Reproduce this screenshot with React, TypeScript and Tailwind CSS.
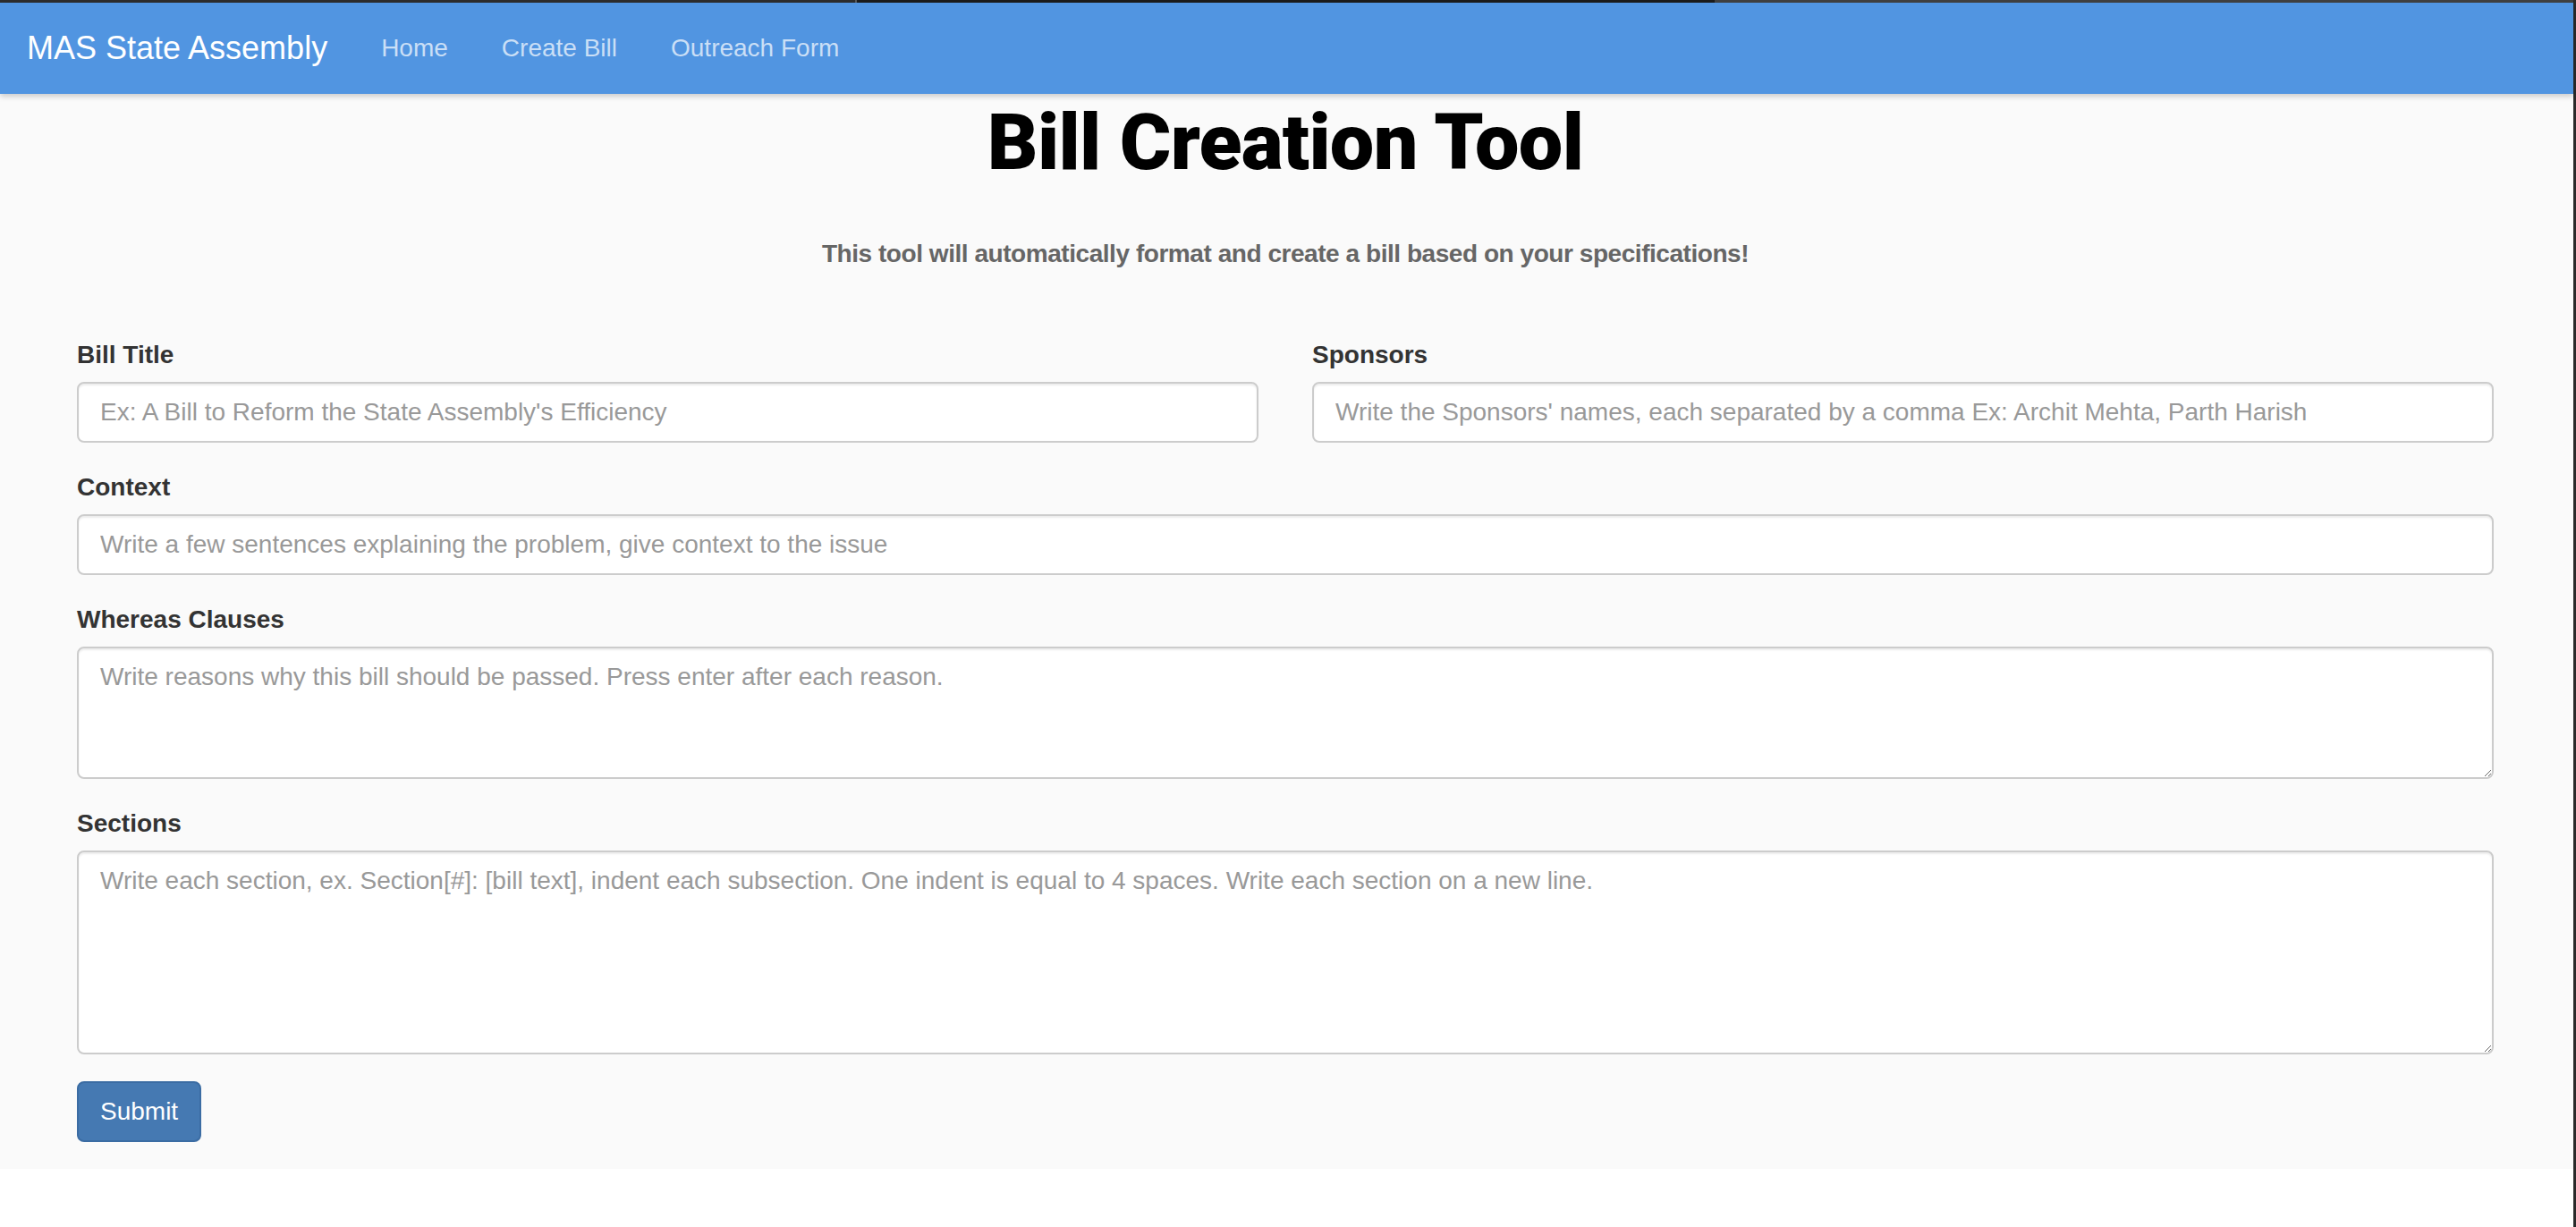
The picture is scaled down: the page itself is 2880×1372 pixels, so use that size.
const navLinks = ['Home', 'Create Bill', 'Outreach Form']

const inputCls =
  'block w-full h-[68px] px-[24px] bg-white border-2 border-[#cccccc] rounded-[8px] ' +
  'shadow-[inset_0_2px_2px_rgba(0,0,0,0.075)] text-[28px] leading-[40px] text-[#555] ' +
  'placeholder:text-[#999] outline-none'

const areaCls =
  'block w-full px-[24px] py-[12px] bg-white border-2 border-[#cccccc] rounded-[8px] ' +
  'shadow-[inset_0_2px_2px_rgba(0,0,0,0.075)] text-[28px] leading-[40px] text-[#555] ' +
  'placeholder:text-[#999] outline-none resize-y'

function Label({ children }: { children: string }) {
  return (
    <label className="block mb-[10px] text-[28px] leading-[40px] font-bold text-[#333]">
      {children}
    </label>
  )
}

export default function App() {
  return (
    <div className="flex min-h-[1372px] bg-white font-['Liberation_Sans',Arial,sans-serif]">
      <div className="flex-1 flex flex-col">

        {/* window chrome strip */}
        <div className="flex h-[3px]">
          <span className="w-[956px] bg-[#2d2d2d]" />
          <span className="w-[2px] bg-[#5a5a5a]" />
          <span className="w-[959px] bg-[#1c1c1c]" />
          <span className="flex-1 bg-[#404040]" />
        </div>

        {/* Navbar */}
        <nav className="relative z-10 h-[102px] bg-[#5195e1] flex items-center
                        shadow-[0_3px_6px_rgba(0,0,0,0.18)]">
          <a className="pl-[30px] pr-[30px] text-[36px] leading-[40px] text-white">
            MAS State Assembly
          </a>
          {navLinks.map(l => (
            <a key={l} className="px-[30px] text-[28px] leading-[40px] text-[#cadff6]">
              {l}
            </a>
          ))}
        </nav>

        {/* Page */}
        <main className="bg-[#fafafa] pl-[86px] pr-[89px] pb-[30px]">
          <h1 className="mt-[10px] text-center text-[88px] leading-none font-black text-black
                         tracking-[-0.7px] font-['Roboto',sans-serif]">
            Bill Creation Tool
          </h1>
          <p className="mt-[61px] text-center text-[28px] leading-[40px] font-bold text-[#666]
                        tracking-[-0.45px]">
            This tool will automatically format and create a bill based on your specifications!
          </p>

          <form className="mt-[73px]">
            <div className="grid grid-cols-2 gap-x-[60px]">
              <div className="mb-[30px]">
                <Label>Bill Title</Label>
                <input className={inputCls} placeholder="Ex: A Bill to Reform the State Assembly's Efficiency" />
              </div>
              <div className="mb-[30px]">
                <Label>Sponsors</Label>
                <input className={inputCls}
                  placeholder="Write the Sponsors' names, each separated by a comma Ex: Archit Mehta, Parth Harish" />
              </div>
            </div>

            <div className="mb-[30px]">
              <Label>Context</Label>
              <input className={inputCls}
                placeholder="Write a few sentences explaining the problem, give context to the issue" />
            </div>

            <div className="mb-[30px]">
              <Label>Whereas Clauses</Label>
              <textarea className={areaCls + ' h-[148px]'}
                placeholder="Write reasons why this bill should be passed. Press enter after each reason." />
            </div>

            <div className="mb-[30px]">
              <Label>Sections</Label>
              <textarea className={areaCls + ' h-[228px]'}
                placeholder="Write each section, ex. Section[#]: [bill text], indent each subsection. One indent is equal to 4 spaces. Write each section on a new line." />
            </div>

            <button type="button"
              className="h-[68px] px-[24px] rounded-[8px] bg-[#4579b2] border-2 border-[#3b6ca3]
                         text-[28px] leading-[40px] text-white">
              Submit
            </button>
          </form>
        </main>
      </div>
      <div className="w-[3px] bg-[#2a2a2a]" />
    </div>
  )
}
